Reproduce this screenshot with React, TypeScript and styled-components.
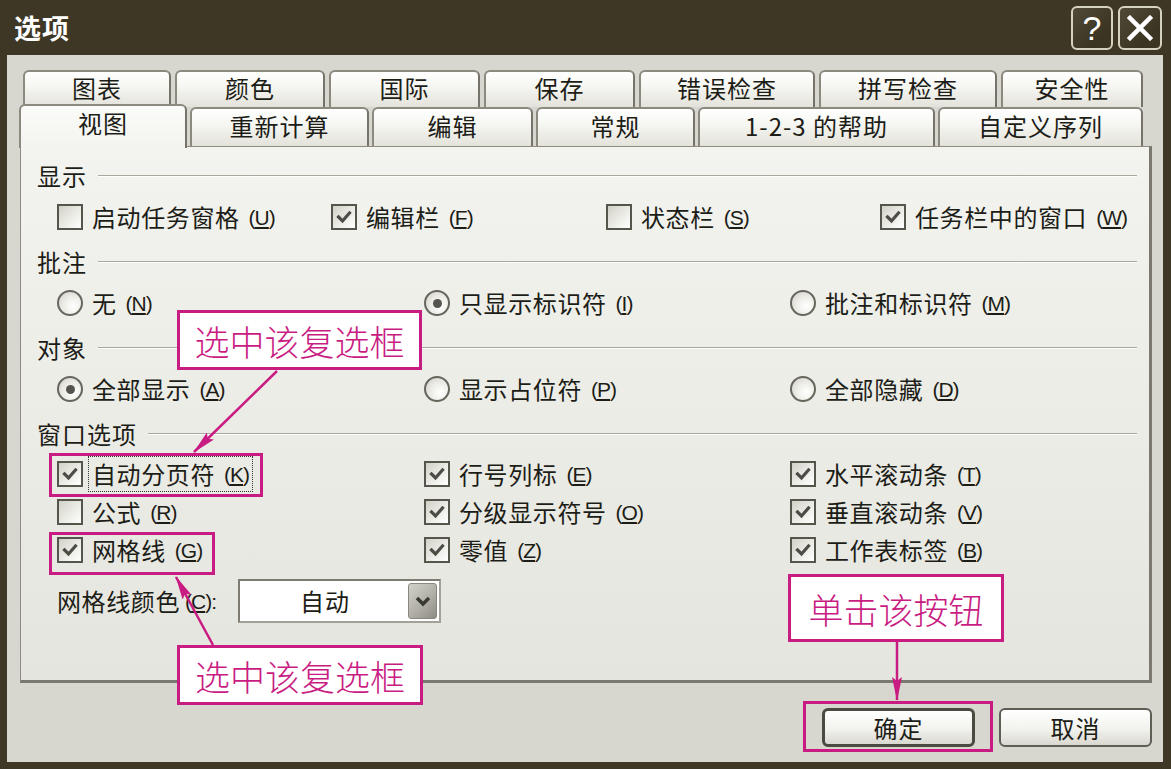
import React from "react";
import styled, { createGlobalStyle } from "styled-components";

const UI_FONT = `"Noto Sans CJK SC", "Noto Sans", sans-serif`;
const PINK = "#c91c82";

const Global = createGlobalStyle`
  html, body { margin: 0; padding: 0; background: #3e3725; }
  body { font-family: ${UI_FONT}; }
  * { box-sizing: border-box; }
`;

const Window = styled.div`
  position: relative;
  width: 1171px;
  height: 769px;
  background: #3e3725;
  display: flex;
  flex-direction: column;
  padding: 0 8px 7px 7px;
  overflow: hidden;
`;

const TitleBar = styled.div`
  height: 55px;
  flex: none;
  display: flex;
  align-items: center;
  justify-content: space-between;
  padding: 0 1px 0 7px;
`;

const TitleText = styled.div`
  color: #ffffff;
  font-size: 27px;
  font-weight: 700;
  letter-spacing: 1px;
  line-height: 1;
`;

const TitleButtons = styled.div`
  display: flex;
  gap: 5px;
  align-self: flex-start;
  margin-top: 6px;
`;

const TitleButton = styled.div<{ $w: number }>`
  width: ${(p) => p.$w}px;
  height: 44px;
  border: 2px solid #d6d2c2;
  border-radius: 6px;
  background: linear-gradient(135deg, #514a37 0%, #3c3523 70%);
  display: flex;
  align-items: center;
  justify-content: center;
  color: #ffffff;
  font-family: "Liberation Sans", sans-serif;
  font-size: 34px;
  line-height: 1;
`;

const Body = styled.div`
  flex: 1;
  background: #d8d7cf;
  padding: 15px 11px 15px 13px;
  display: flex;
  flex-direction: column;
`;

const TabRowBack = styled.div`
  height: 37px;
  display: flex;
  gap: 4px;
  padding-left: 3px;
`;

const TabRowFront = styled.div`
  height: 39px;
  display: flex;
  align-items: flex-start;
  gap: 3px;
  margin-left: -1px;
`;

const Tab = styled.div<{ $w: number; $active?: boolean }>`
  width: ${(p) => p.$w}px;
  height: ${(p) => (p.$active ? "44px" : "100%")};
  margin-top: ${(p) => (p.$active ? "-3px" : "0")};
  position: ${(p) => (p.$active ? "relative" : "static")};
  z-index: ${(p) => (p.$active ? 2 : "auto")};
  flex: none;
  border: 2px solid #8c8a7f;
  border-right-color: #76746a;
  border-bottom: none;
  border-radius: 6px 6px 0 0;
  background: ${(p) =>
    p.$active
      ? "linear-gradient(to bottom, #fbfbf9 0%, #f3f3ef 100%)"
      : "linear-gradient(to bottom, #ffffff 0%, #f5f5f1 45%, #e3e2da 100%)"};
  display: flex;
  align-items: center;
  justify-content: center;
  padding-bottom: ${(p) => (p.$active ? "8px" : "4px")};
  font-size: 24px;
  letter-spacing: 1px;
  color: #1d1d17;
  line-height: 1;
  white-space: nowrap;
`;

const Panel = styled.div`
  height: 537px;
  flex: none;
  border: 1px solid #8e8c82;
  border-right: 3px solid #7b796f;
  border-bottom: 3px solid #7b796f;
  background: linear-gradient(to bottom, #f3f3ef 0%, #ebebe5 60%, #e5e5df 100%);
  padding: 13px 12px 0 16px;
  display: flex;
  flex-direction: column;
`;

const Section = styled.div<{ $first?: boolean }>`
  display: flex;
  flex-direction: column;
  gap: 5px;
  margin-top: ${(p) => (p.$first ? "0" : "9px")};
`;

const Header = styled.div`
  height: 32px;
  display: flex;
  align-items: center;
  gap: 11px;
  font-size: 24px;
  letter-spacing: 1px;
  color: #1d1d17;
  line-height: 1;
`;

const Rule = styled.div`
  flex: 1;
  height: 2px;
  border-top: 1px solid #a9a89f;
  border-bottom: 1px solid #ffffff;
`;

const Row = styled.div<{ $cols: string }>`
  height: 40px;
  padding-left: 20px;
  display: grid;
  grid-template-columns: ${(p) => p.$cols};
  align-items: center;
`;

const OptGrid = styled.div`
  padding-left: 20px;
  display: grid;
  grid-template-columns: 367px 366px 1fr;
  grid-auto-rows: 38px;
  align-items: center;
`;

const Item = styled.div`
  display: flex;
  align-items: center;
  gap: 9px;
  white-space: nowrap;
`;

const Box = styled.span`
  width: 26px;
  height: 26px;
  flex: none;
  border: 2px solid #55554c;
  background: linear-gradient(135deg, #d2d1c8 0%, #ecece6 55%, #ffffff 100%);
  display: inline-flex;
  align-items: center;
  justify-content: center;
`;

const RadioDot = styled.span<{ $on?: boolean }>`
  width: 26px;
  height: 26px;
  flex: none;
  border-radius: 50%;
  border: 2px solid #66665d;
  background: radial-gradient(circle at 65% 65%, #ffffff 0%, #ecece6 50%, #cdccc4 100%);
  display: inline-flex;
  align-items: center;
  justify-content: center;
  &::after {
    content: "";
    width: 9px;
    height: 9px;
    border-radius: 50%;
    background: #55554d;
    display: ${(p) => (p.$on ? "block" : "none")};
  }
`;

const Label = styled.span<{ $focus?: boolean }>`
  font-size: 24px;
  letter-spacing: 0.6px;
  color: #1d1d17;
  line-height: 1;
  display: inline-flex;
  align-items: center;
  padding: ${(p) => (p.$focus ? "5px 3px" : "0")};
  margin-left: ${(p) => (p.$focus ? "-4px" : "0")};
  border: ${(p) => (p.$focus ? "1px dotted #333" : "none")};
`;

const Mn = styled.span<{ $gap?: number }>`
  font-family: "Liberation Sans", sans-serif;
  font-size: 21px;
  letter-spacing: -1px;
  margin-left: ${(p) => (p.$gap ?? 9)}px;
  color: #1d1d17;
  & u {
    text-underline-offset: 2px;
  }
`;

const ColorRow = styled.div`
  margin-top: 6px;
  height: 42px;
  padding-left: 20px;
  display: flex;
  align-items: center;
  gap: 22px;
`;

const Select = styled.div`
  width: 203px;
  height: 44px;
  border: 2px solid #7e7c72;
  border-right-color: #a4a298;
  border-bottom-color: #a4a298;
  background: #ffffff;
  display: flex;
  align-items: center;
  padding: 2px;
`;

const SelectValue = styled.div`
  flex: 1;
  text-align: center;
  font-size: 24px;
  letter-spacing: 1px;
  color: #1d1d17;
  line-height: 1;
`;

const DropButton = styled.div`
  width: 29px;
  height: 36px;
  border-radius: 3px;
  border: 1px solid #8a887e;
  background: linear-gradient(135deg, #d3d2c9 0%, #aeaca2 60%, #8f8d83 100%);
  display: flex;
  align-items: center;
  justify-content: center;
`;

const ButtonRow = styled.div`
  margin-top: 25px;
  display: flex;
  justify-content: flex-end;
  gap: 24px;
`;

const Button = styled.div<{ $default?: boolean }>`
  width: 153px;
  height: 39px;
  border: ${(p) => (p.$default ? "3px solid #4b4a40" : "2px solid #5f5e55")};
  border-radius: 6px;
  background: linear-gradient(to bottom, #ffffff 0%, #f2f2ee 55%, #d9d8d0 100%);
  display: flex;
  align-items: center;
  justify-content: center;
  font-size: 24px;
  letter-spacing: 1px;
  color: #1d1d17;
  line-height: 1;
`;

/* ---------- annotations (overlay) ---------- */

const Callout = styled.div<{ $x: number; $y: number; $w: number; $h: number }>`
  position: absolute;
  left: ${(p) => p.$x}px;
  top: ${(p) => p.$y}px;
  width: ${(p) => p.$w}px;
  height: ${(p) => p.$h}px;
  border: 3px solid ${PINK};
  background: #ffffff;
  color: ${PINK};
  font-size: 35px;
  font-weight: 300;
  display: flex;
  align-items: center;
  justify-content: center;
  line-height: 1;
  z-index: 5;
`;

const Highlight = styled.div<{ $x: number; $y: number; $w: number; $h: number }>`
  position: absolute;
  left: ${(p) => p.$x}px;
  top: ${(p) => p.$y}px;
  width: ${(p) => p.$w}px;
  height: ${(p) => p.$h}px;
  border: 3px solid ${PINK};
  z-index: 4;
  pointer-events: none;
`;

const ArrowLayer = styled.svg`
  position: absolute;
  left: 0;
  top: 0;
  z-index: 6;
  pointer-events: none;
`;

/* ---------- pieces ---------- */

const CheckMark = () => (
  <svg width="16" height="16" viewBox="0 0 16 16">
    <path d="M2.5 8 L6.5 12 L13.5 4" fill="none" stroke="#4d4d45" strokeWidth="3.2" strokeLinecap="square" />
  </svg>
);

const Chevron = () => (
  <svg width="16" height="12" viewBox="0 0 16 12">
    <path d="M2 3 L8 9 L14 3" fill="none" stroke="#3a3a33" strokeWidth="3.5" />
  </svg>
);

const Text = ({ t, k, focus }: { t: string; k: string; focus?: boolean }) => (
  <Label $focus={focus}>
    {t}
    <Mn>
      (<u>{k}</u>)
    </Mn>
  </Label>
);

const Check = ({ t, k, on, focus }: { t: string; k: string; on?: boolean; focus?: boolean }) => (
  <Item>
    <Box>{on && <CheckMark />}</Box>
    <Text t={t} k={k} focus={focus} />
  </Item>
);

const Radio = ({ t, k, on }: { t: string; k: string; on?: boolean }) => (
  <Item>
    <RadioDot $on={on} />
    <Text t={t} k={k} />
  </Item>
);

const backTabs: [string, number][] = [
  ["图表", 148],
  ["颜色", 150],
  ["国际", 151],
  ["保存", 151],
  ["错误检查", 176],
  ["拼写检查", 178],
  ["安全性", 142],
];

const frontTabs: [string, number, boolean?][] = [
  ["视图", 168, true],
  ["重新计算", 179],
  ["编辑", 161],
  ["常规", 159],
  ["1-2-3 的帮助", 237],
  ["自定义序列", 205],
];

export default function App() {
  return (
    <>
      <Global />
      <Window>
        <TitleBar>
          <TitleText>选项</TitleText>
          <TitleButtons>
            <TitleButton $w={42}>?</TitleButton>
            <TitleButton $w={44}>
              <svg width="26" height="26" viewBox="0 0 26 26">
                <path d="M3 3 L23 23 M23 3 L3 23" stroke="#ffffff" strokeWidth="4.5" strokeLinecap="square" />
              </svg>
            </TitleButton>
          </TitleButtons>
        </TitleBar>

        <Body>
          <TabRowBack>
            {backTabs.map(([t, w]) => (
              <Tab key={t} $w={w}>
                {t}
              </Tab>
            ))}
          </TabRowBack>
          <TabRowFront>
            {frontTabs.map(([t, w, a]) => (
              <Tab key={t} $w={w} $active={a}>
                {t}
              </Tab>
            ))}
          </TabRowFront>

          <Panel>
            <Section $first>
              <Header>
                显示
                <Rule />
              </Header>
              <Row $cols="274px 275px 274px 1fr">
                <Check t="启动任务窗格" k="U" />
                <Check t="编辑栏" k="F" on />
                <Check t="状态栏" k="S" />
                <Check t="任务栏中的窗口" k="W" on />
              </Row>
            </Section>

            <Section>
              <Header>
                批注
                <Rule />
              </Header>
              <Row $cols="367px 366px 1fr">
                <Radio t="无" k="N" />
                <Radio t="只显示标识符" k="I" on />
                <Radio t="批注和标识符" k="M" />
              </Row>
            </Section>

            <Section>
              <Header>
                对象
                <Rule />
              </Header>
              <Row $cols="367px 366px 1fr">
                <Radio t="全部显示" k="A" on />
                <Radio t="显示占位符" k="P" />
                <Radio t="全部隐藏" k="D" />
              </Row>
            </Section>

            <Section>
              <Header>
                窗口选项
                <Rule />
              </Header>
              <OptGrid>
                <Check t="自动分页符" k="K" on focus />
                <Check t="行号列标" k="E" on />
                <Check t="水平滚动条" k="T" on />
                <Check t="公式" k="R" />
                <Check t="分级显示符号" k="O" on />
                <Check t="垂直滚动条" k="V" on />
                <Check t="网格线" k="G" on />
                <Check t="零值" k="Z" on />
                <Check t="工作表标签" k="B" on />
              </OptGrid>
              <ColorRow>
                <Label>
                  网格线颜色
                  <Mn $gap={5}>
                    (<u>C</u>):
                  </Mn>
                </Label>
                <Select>
                  <SelectValue>自动</SelectValue>
                  <DropButton>
                    <Chevron />
                  </DropButton>
                </Select>
              </ColorRow>
            </Section>
          </Panel>

          <ButtonRow>
            <Button $default>确定</Button>
            <Button>取消</Button>
          </ButtonRow>
        </Body>

        <Highlight $x={49} $y={453} $w={214} $h={44} />
        <Highlight $x={49} $y={532} $w={166} $h={43} />
        <Highlight $x={803} $y={701} $w={190} $h={51} />

        <Callout $x={177} $y={310} $w={245} $h={60}>
          选中该复选框
        </Callout>
        <Callout $x={177} $y={645} $w={246} $h={60}>
          选中该复选框
        </Callout>
        <Callout $x={788} $y={574} $w={216} $h={68}>
          单击该按钮
        </Callout>

        <ArrowLayer width="1171" height="769" viewBox="0 0 1171 769">
          <defs>
            <marker
              id="head"
              viewBox="0 0 24 10"
              refX="23"
              refY="5"
              markerWidth="24"
              markerHeight="10"
              markerUnits="userSpaceOnUse"
              orient="auto"
            >
              <path d="M0 0 L24 5 L0 10 L4 5 Z" fill={PINK} />
            </marker>
          </defs>
          <line x1="277" y1="371" x2="194" y2="452" stroke={PINK} strokeWidth="2.5" markerEnd="url(#head)" />
          <line x1="213" y1="645" x2="176" y2="577" stroke={PINK} strokeWidth="2.5" markerEnd="url(#head)" />
          <line x1="897" y1="642" x2="897" y2="700" stroke={PINK} strokeWidth="2.5" markerEnd="url(#head)" />
        </ArrowLayer>
      </Window>
    </>
  );
}
